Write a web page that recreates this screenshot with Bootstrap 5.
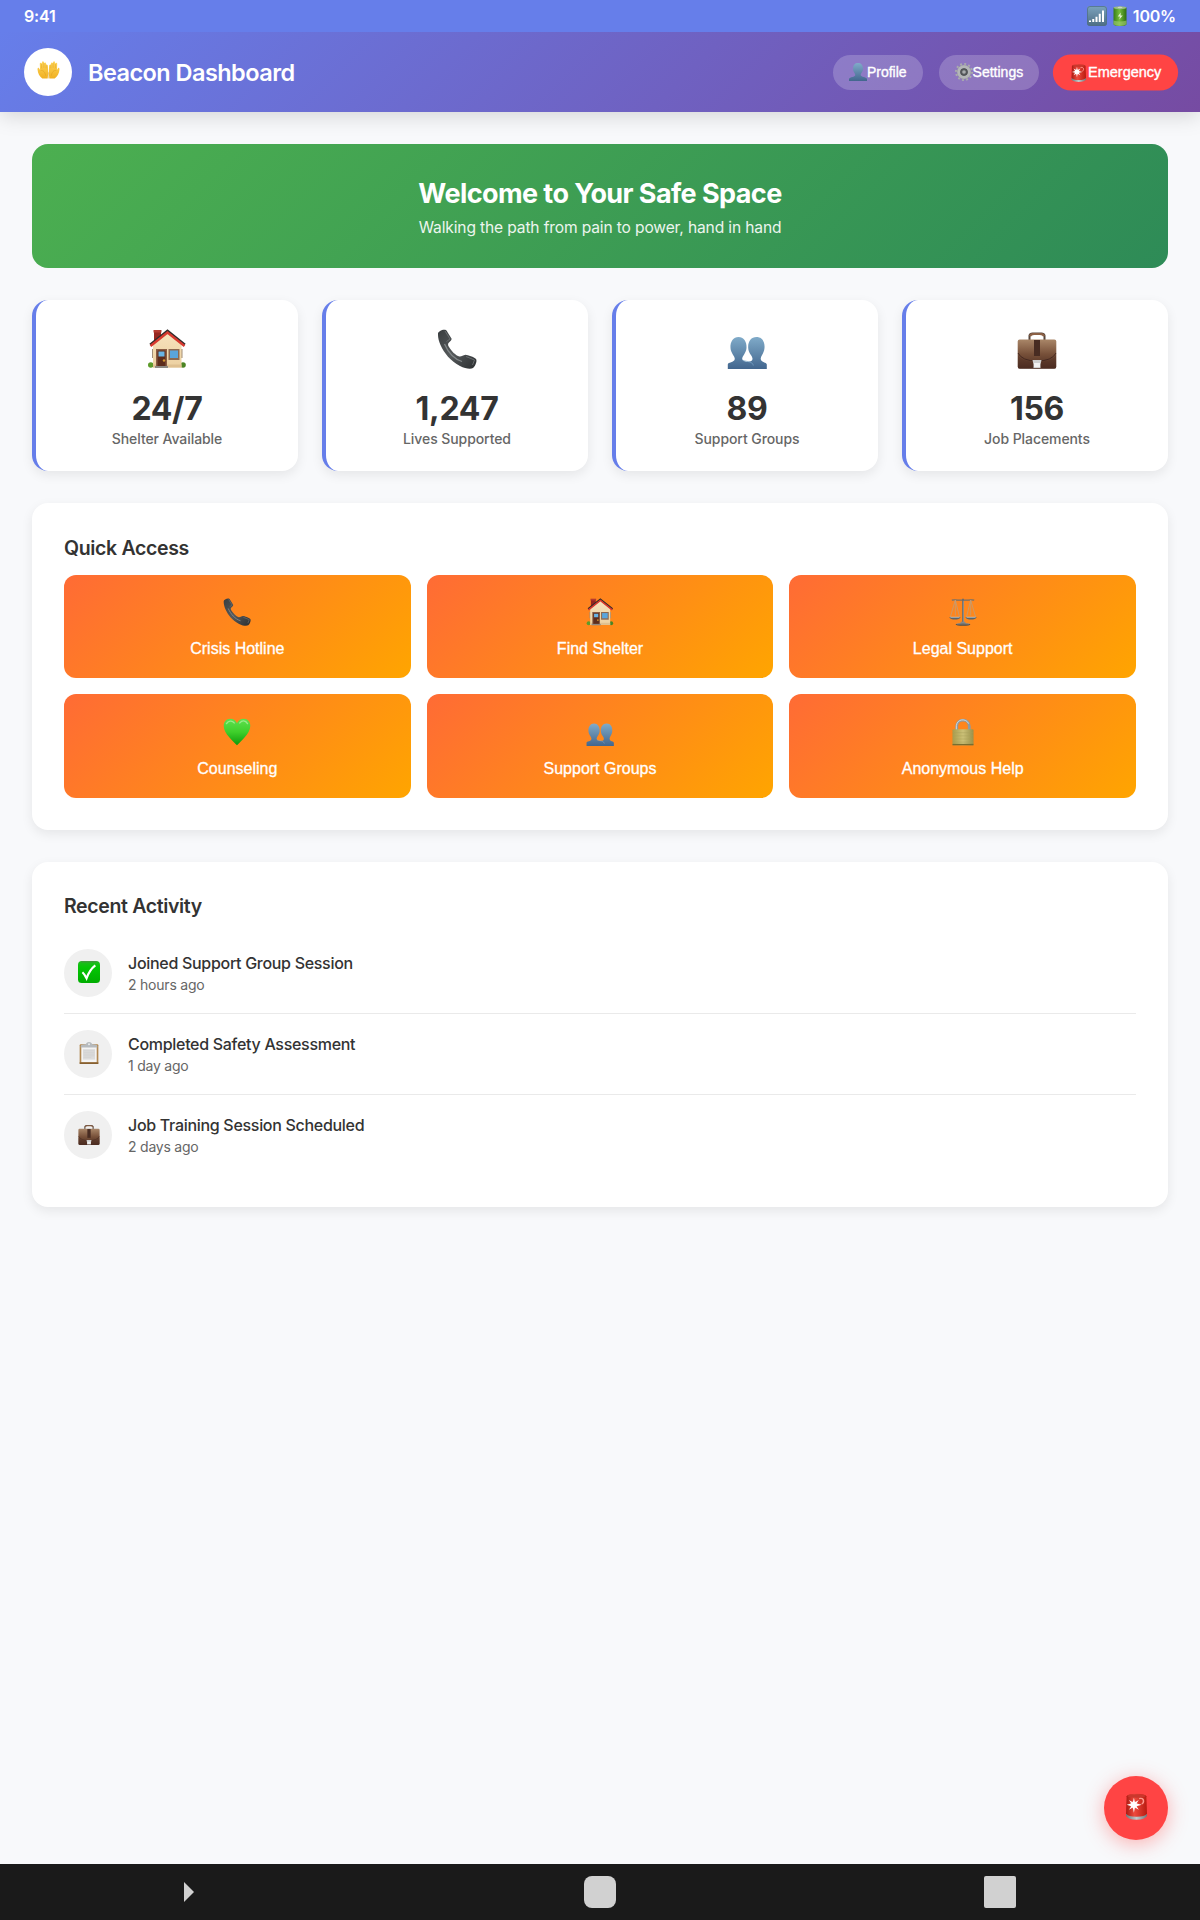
<!DOCTYPE html>
<html lang="en">
<head>
<meta charset="utf-8">
<meta name="viewport" content="width=device-width, initial-scale=1">
<title>Beacon Dashboard</title>
<link href="https://cdn.jsdelivr.net/npm/bootstrap@5.3.0/dist/css/bootstrap.min.css" rel="stylesheet">
<style>
body{font-family:Inter,"Liberation Sans",sans-serif;background:#f8f9fb;color:#333;min-height:1920px;line-height:1.2}
svg{display:block;flex:none}
.status-bar{height:32px;background:#667eea;font-size:16px;font-weight:600;letter-spacing:-.2px;position:relative;z-index:2}
.status-bar span{padding-top:1px}
.status-icons{gap:6px;margin-right:6px}
.top-bar{height:80px;background:linear-gradient(135deg,#667eea 0%,#764ba2 100%);box-shadow:0 4px 20px rgba(0,0,0,.15)}
.brand-disc{width:48px;height:48px}
.brand-name{font-size:23.5px;font-weight:600;letter-spacing:-.55px;padding-top:2px}
.pill{font:500 14px/19px "Liberation Sans",sans-serif;padding:8px 16px;height:35px;border:0;border-radius:18px;color:#fff;background:rgba(255,255,255,.2);-webkit-text-stroke:.35px #fff}
.pill-alert{background:#ff4444;transform:scale(1.035)}
.content-area{padding:32px;gap:32px}
.welcome{height:124px;border-radius:16px;background:linear-gradient(135deg,#4caf50 0%,#2e8b57 100%)}
.welcome h1{font-size:27px;font-weight:700;line-height:34px;letter-spacing:-.58px;margin:2px 0 0}
.welcome p{font-size:15.6px;line-height:20px;letter-spacing:-.15px;opacity:.9;margin:7px 0 0}
.stat-grid{display:grid;grid-template-columns:repeat(4,1fr);gap:24px}
.stat-tile{height:171px;border-radius:16px;border-left:4px solid #667eea;padding-top:29px;box-shadow:0 4px 12px rgba(0,0,0,.08)}
.stat-num{font-size:32px;font-weight:700;line-height:40px;letter-spacing:-.3px;margin-top:20px}
.stat-label{font-size:14px;font-weight:500;line-height:17px;letter-spacing:-.08px;color:#666;margin-top:1px}
.panel{border-radius:16px;padding:32px;box-shadow:0 4px 12px rgba(0,0,0,.08)}
.panel h2{font-size:19.5px;font-weight:600;line-height:24px;letter-spacing:-.35px;margin:0 0 15.3px}
.panel-quick h2{padding-top:1px;margin-bottom:14.5px}
.quick-grid{display:grid;grid-template-columns:repeat(3,1fr);gap:16px}
.quick-btn{height:103.5px;border:0;border-radius:12px;padding:23.500px 16px 0;color:#fff;background:linear-gradient(135deg,#ff6b35 0%,#ffa500 100%);font:500 16px/20px "Liberation Sans",sans-serif;-webkit-text-stroke:.3px #fff}
.quick-btn span{margin-top:13px}
.act-row{padding:16px 0;border-bottom:1px solid #eaeaea}
.act-row:last-child{border-bottom:0}
.act-disc{width:48px;height:48px;background:#f0f0f0;padding:0 0 2px 2px}
.act-title{font-size:16px;font-weight:500;line-height:20px;letter-spacing:-.3px}
.act-time{font-size:14px;line-height:17px;letter-spacing:-.22px;color:#666;margin-top:3px}
.fab{right:32px;bottom:80px;width:64px;height:64px;border:0;background:#ff4444;box-shadow:0 4px 20px rgba(255,68,68,.4);padding-bottom:4px}
.sys-nav{height:56px;background:#1a1a1a}
.sys-key{width:32px;height:32px}
.key-home{background:#d1d1d1;border-radius:8px}
.key-recent{background:#d1d1d1;border-radius:2px}
</style>
<script src="https://cdn.jsdelivr.net/npm/bootstrap@5.3.0/dist/js/bootstrap.bundle.min.js"></script>
</head>
<body>
<svg width="0" height="0" class="position-absolute" aria-hidden="true">
<defs>
<linearGradient id="gBlue" x2="0" y2="1"><stop stop-color="#80abc9"/><stop offset="1" stop-color="#42668e"/></linearGradient>
<linearGradient id="gBrown" x2="0" y2="1"><stop stop-color="#a98668"/><stop offset=".5" stop-color="#775039"/><stop offset="1" stop-color="#4a2b20"/></linearGradient>
<linearGradient id="gPhone" x2="1" y2="1"><stop stop-color="#3a3e40"/><stop offset=".5" stop-color="#55595b"/><stop offset="1" stop-color="#2b2e30"/></linearGradient>
<linearGradient id="gHeart" x2="0" y2="1"><stop stop-color="#5ee04f"/><stop offset=".5" stop-color="#3fcf2b"/><stop offset="1" stop-color="#0c9a0c"/></linearGradient>
<linearGradient id="gCheck" x2="0" y2="1"><stop stop-color="#23b923"/><stop offset=".3" stop-color="#05c505"/><stop offset="1" stop-color="#00ad00"/></linearGradient>
<linearGradient id="gWall" x2="0" y2="1"><stop stop-color="#f7e3bd"/><stop offset="1" stop-color="#ecd0a0"/></linearGradient>
<linearGradient id="gLock"><stop stop-color="#a89c4c"/><stop offset=".5" stop-color="#cbc077"/><stop offset="1" stop-color="#99904a"/></linearGradient>
<linearGradient id="gHand" x2="0" y2="1"><stop stop-color="#ffd75a"/><stop offset="1" stop-color="#f0b022"/></linearGradient>
<linearGradient id="gSiren"><stop stop-color="#a81a12"/><stop offset=".4" stop-color="#ee4a3d"/><stop offset="1" stop-color="#b81b10"/></linearGradient>
<linearGradient id="gBase"><stop stop-color="#6f7678"/><stop offset=".5" stop-color="#c3cacb"/><stop offset="1" stop-color="#6f7678"/></linearGradient>
<linearGradient id="gBat"><stop stop-color="#357d16"/><stop offset=".45" stop-color="#76bd3c"/><stop offset="1" stop-color="#2c6d12"/></linearGradient>
<linearGradient id="gSig" x2="0" y2="1"><stop stop-color="#7ba3bd"/><stop offset="1" stop-color="#4d6d84"/></linearGradient>
<symbol id="i-house" viewBox="0 0 40 40">
<circle cx="3.800" cy="36" r="2.800" fill="#5d9b2b"/><circle cx="36" cy="36" r="2.800" fill="#4b8424"/>
<path d="M7 2h7v14H7z" fill="#97261f"/><path d="M6.500 1h8v2.500h-8z" fill="#b53a30"/>
<path d="M5 20h2v9H5zM33.500 20h2v9h-2z" fill="#a39078"/>
<path d="M6 15 20.500 4 34.500 15v23.500H6z" fill="url(#gWall)"/>
<path d="M6 35.500h28.500v3H6z" fill="#dfc090"/>
<path d="M3 15.500 20.500 1.500 38 15.500" fill="none" stroke="#302b2b" stroke-width="2"/>
<path d="M3.500 17 20.500 3.500 37.500 17" fill="none" stroke="#d8392f" stroke-width="2.400"/>
<path d="M9 20h11v18H9z" fill="#8a5c42"/><path d="M10.500 21.500h8V37h-8z" fill="#5d2c1c"/>
<path d="M11.500 22.500h6v5h-6z" fill="#69b4e4"/><circle cx="17" cy="31.500" r="1.200" fill="#d59a32"/>
<path d="M21.500 20h11v11h-11z" fill="#8d6950"/><path d="M23 21.500h8v7.500h-8z" fill="#5aa5dc"/>
<path d="M8 37h13v2H8z" fill="#8d8983"/></symbol>
<symbol id="i-phone" viewBox="0 0 40 40">
<path d="M1 5C.5 3 5 .3 8 .8c1.500.2 2 1.400 3 3.200l3.500 5.500c.5 1-.8 2.500-2.500 4-1 1-1.500 2 0 4.500 2.500 4 6.500 8.500 10.500 9.500 2 .3 3.500-1.500 6-1.800 2.500.2 8.500 2.300 10.500 4.300 1.500 2-1 7.500-3 9-2.500 1.500-8 .5-13-2C13.500 32 7 24 3.500 16 2 12.500.8 8.500 1 5z" fill="url(#gPhone)"/>
<path d="M7.500 15c3.500 8 9.500 15 17.500 17.500" fill="none" stroke="#83888a" stroke-width="1.300"/>
<path d="M8 2 13 10l-3.500 2.500M29 27.500l8.500 3.500-2 5" fill="none" stroke="#6c7173" stroke-width=".9"/></symbol>
<symbol id="i-people" viewBox="0 0 40 40">
<path d="M.8 40v-4.500c0-2.500 6.500-1.800 7-5.500.2-3-4-5.500-4.300-11C3 12.500 6.500 8 11.500 8S20 12.500 19.500 19c-.4 5.500-4.500 8-4.300 11 .5 3.700 10.800 3 11 6V40z" fill="url(#gBlue)"/>
<path d="M13.500 32c4 2.500 2 0 6 .8 5.500-.4 5.800-1 6-3.300-.2-3-4-5-4.300-10.500C20.800 12.500 24 8 29.500 8s8.500 4.500 8 11c-.4 5.500-4 8-3.800 11 .4 3.700 6 3 6.100 5.500V40H26z" fill="url(#gBlue)"/>
<path d="M16 31.500c5.500 1.500 9.500 1 10.300 5" fill="none" stroke="#7ba7c8" stroke-width=".7"/></symbol>
<symbol id="i-person" viewBox="0 0 40 40">
<path d="M0 40v-5c2-4.500 13-4 14-8 .4-3.500-5-6.500-5-14C9 4 13.500 0 20 0s11 4 11 13c0 7.500-5.400 10.500-5 14 1 4 12 3.500 14 8v5z" fill="url(#gBlue)"/></symbol>
<symbol id="i-case" viewBox="0 0 40 40">
<path d="M12.500 11V6.500Q13 4.500 15.500 4.500h9Q27 4.500 27.500 6.500V11" fill="none" stroke="#55443a" stroke-width="2"/>
<path d="M12 7Q12.500 4 16 4h8q3.500 0 4 3l-2 .5q-.5-1.500-3-1.500h-6q-2.500 0-3 1.500z" fill="#8b6045"/>
<rect x=".7" y="10.500" width="38.600" height="29.300" rx="2" fill="url(#gBrown)"/>
<path d="M1 26q4 7 19 7t19-7v12q0 1.500-1.500 1.500h-35Q1 39.500 1 38z" fill="#4e2c22" opacity=".4"/>
<path d="M1 24q4 8 19 8t19-8" fill="none" stroke="#442820" stroke-width="1"/>
<path d="M17 11h6v16h-6z" fill="#482c22"/>
<path d="M15.500 31h9l-1 4.500V39h-7v-3.500z" fill="#cfcfcf"/><path d="M17 34h6v4h-6z" fill="#f1f1f1"/></symbol>
<symbol id="i-scales" viewBox="0 0 40 40">
<path d="M4 3c6-1.500 10 1 16 0 6 1 10-1.500 16 0" fill="none" stroke="#746f69" stroke-width="1.800"/>
<path d="M20 1v35" stroke="#686b6c" stroke-width="2.600"/><path d="M20.500 4v32" stroke="#b7b9b8" stroke-width=".7"/>
<path d="M9 3 2 27M9 3l6 24M9 3v22M31 3l-6 24M31 3l7 24M31 3v22" fill="none" stroke="#b9a184" stroke-width="1"/>
<path d="M.5 27h16c-1 5-15 5-16 0zM23.500 27h16c-1 5-15 5-16 0z" fill="#5d6468"/><path d="M2 27.500h13M25 27.500h13" stroke="#c3c9ca" stroke-width="1.200"/>
<path d="M17 34h6l1 3h-8z" fill="#87898a"/><ellipse cx="20" cy="37.800" rx="10.500" ry="2" fill="#4d4d4b"/><path d="M11 37h18" stroke="#b3b2ab" stroke-width="1"/></symbol>
<symbol id="i-heart" viewBox="0 0 40 40">
<path d="M20 39C15 33 1 23 1 11 1 5 5 1 10.500 1c4.500 0 8 2.700 9.500 6.500C21.500 3.700 25 1 29.500 1 35 1 39 5 39 11c0 12-14 22-19 28z" fill="url(#gHeart)"/>
<path d="M5 8c2-4 8-5 11-1M24 7c3-4 8-4 11 1" fill="none" stroke="#b4f3a4" stroke-width="2" stroke-linecap="round" opacity=".7"/></symbol>
<symbol id="i-lock" viewBox="0 0 40 40">
<path d="M11 20v-8c0-12 18-12 18 0v8" fill="none" stroke="#8f9ba1" stroke-width="4"/><path d="M10.500 18v-7c1-10 14-11 17.500-3" fill="none" stroke="#d3dde1" stroke-width="1.300"/>
<rect x="5" y="16" width="30" height="23" rx="1.500" fill="url(#gLock)"/><path d="M5 21h30M5 25.500h30M5 30h30M5 34.500h30" stroke="#a99e58" stroke-width=".6"/><path d="M5 37h30v2H5z" fill="#786d30"/></symbol>
<symbol id="i-check" viewBox="0 0 40 40">
<rect width="40" height="40" rx="7" fill="url(#gCheck)"/><path d="M6 1.500h28" stroke="#57864f" stroke-width="1.500"/>
<path d="M8 20.500c3 2.500 5.500 7 7.500 11C19 22 25.500 12.500 31.500 8" fill="none" stroke="#fff" stroke-width="4"/></symbol>
<symbol id="i-clip" viewBox="0 0 40 40">
<rect x="3" y="4" width="34" height="36" rx="2" fill="#b18852"/><path d="M3 37h34v3H3z" fill="#865f30"/>
<rect x="6" y="6.500" width="28" height="30" fill="#f4f4f4"/><path d="M9 13h22v19H9z" fill="#dcdcdc"/>
<path d="M10 16h20M10 19h20M10 22h20M10 25h20M10 28h14" stroke="#cdcdcd" stroke-width="1"/>
<path d="M5 7q1-3 9-3Q16 0 20 0t6 4q8 0 9 3v3H5z" fill="#b6babd"/><circle cx="20" cy="4" r="1.700" fill="#eceff0"/></symbol>
<symbol id="i-siren" viewBox="4 0 32 41">
<path d="M4 31v4q3 5.500 16 5.500T36 35v-4z" fill="url(#gBase)"/>
<path d="M5 5q1-4 15-4t15 4l1 26q-3 5-16 5T4 31z" fill="url(#gSiren)"/>
<ellipse cx="20" cy="4.500" rx="13.500" ry="2.500" fill="#c9382d"/>
<path d="M24 8.500c8-2 8 6 4 8" fill="none" stroke="#ff9a90" stroke-width="2.200"/>
<circle cx="16" cy="18" r="5.500" fill="#ffb3ab" opacity=".6"/>
<path d="m16 7 1.600 7 5.900-3.500-3.500 5.500 8 2-8 2 3.500 5.500-5.900-3.500L16 30l-1.600-8-5.900 3.500 3.500-5.500-7-2 7-2-3.500-5.500 5.900 3.500z" fill="#fff"/></symbol>
<symbol id="i-gear" viewBox="0 0 40 40">
<circle cx="20" cy="20" r="17.500" fill="none" stroke="#a9acae" stroke-width="5" stroke-dasharray="4.200 4.960"/>
<circle cx="20" cy="20" r="12" fill="#77797c" stroke="#b4b6b8" stroke-width="7"/>
<circle cx="20" cy="20" r="15.800" fill="none" stroke="#8b8e90" stroke-width=".8"/>
<circle cx="20" cy="20" r="7.500" fill="#5a5d61" stroke="#44474a" stroke-width="1.500"/><circle cx="20" cy="20" r="4" fill="#a9acae"/></symbol>
<symbol id="i-hands" viewBox="0 0 40 32">
<path id="palm" d="M18.500 31H9C4 27 1 22 .5 15c-.2-3 2-4 3-1.500L5 16 4.500 5C4.500 2.500 7 2.500 7.500 5L8.500 2c.5-2.300 3-2 3.200.3L12.500 4c.7-2 3-1.800 3.200.5l.5 3c1-1.500 2.600-.8 2.800 1L19.500 22z" fill="url(#gHand)"/>
<use href="#palm" transform="matrix(-1 0 0 1 40 0)"/>
<path d="M7.800 5v8M11.800 3v9M15.800 6v7M32.200 5v8M28.200 3v9M24.200 6v7M6 17c5-1 8 3 9 9M34 17c-5-1-8 3-9 9M20 20v11" fill="none" stroke="#d69519" stroke-width=".7"/></symbol>
<symbol id="i-signal" viewBox="0 0 40 40">
<rect width="40" height="40" rx="6" fill="url(#gSig)"/><rect x="1" y="1" width="38" height="38" rx="5" fill="none" stroke="#4f6f85" stroke-width="1.500"/>
<path d="M4 29h4v3H4zM10.500 26h4v6h-4zM17 21.500h4V32h-4zM23.500 15.500h4V32h-4zM30 9h4v23h-4z" fill="#fff"/></symbol>
<symbol id="i-battery" viewBox="0 0 28 40">
<path d="M1 3v34q3 3 13 3t13-3V3z" fill="url(#gBat)"/><ellipse cx="14" cy="3.500" rx="13" ry="3" fill="#9bbd83"/><ellipse cx="14" cy="3" rx="5" ry="1.500" fill="#cbd6c2"/>
<path d="M1 29q13 4 26 0v8q-13 5-26 0z" fill="#9cca70" opacity=".65"/><path d="m15.500 13-6 8h4.500L12.500 27l7-8H15z" fill="#e2f0d2"/></symbol>
</defs></svg>

<div class="status-bar d-flex align-items-center justify-content-between px-4 text-white">
<span>9:41</span>
<div class="d-flex align-items-center"><div class="status-icons d-flex"><svg width="20" height="20"><use href="#i-signal"/></svg><svg width="14" height="20"><use href="#i-battery"/></svg></div><span>100%</span></div>
</div>
<header class="top-bar d-flex align-items-center justify-content-between px-4 text-white">
<div class="d-flex align-items-center gap-3">
<div class="brand-disc rounded-circle bg-white d-flex align-items-center justify-content-center pb-1"><svg width="23" height="18"><use href="#i-hands"/></svg></div>
<span class="brand-name">Beacon Dashboard</span>
</div>
<div class="d-flex gap-3">
<button class="pill d-flex align-items-center"><svg width="18" height="18"><use href="#i-person"/></svg><span>Profile</span></button>
<button class="pill d-flex align-items-center"><svg width="18" height="18"><use href="#i-gear"/></svg><span>Settings</span></button>
<button class="pill pill-alert d-flex align-items-center"><svg width="18" height="18"><use href="#i-siren"/></svg><span>Emergency</span></button>
</div>
</header>

<main class="content-area d-flex flex-column">
<section class="welcome text-white text-center d-flex flex-column justify-content-center">
<h1>Welcome to Your Safe Space</h1>
<p>Walking the path from pain to power, hand in hand</p>
</section>
<section class="stat-grid text-center">
<div class="stat-tile bg-white"><svg class="mx-auto" width="40" height="40"><use href="#i-house"/></svg><div class="stat-num">24/7</div><div class="stat-label">Shelter Available</div></div>
<div class="stat-tile bg-white"><svg class="mx-auto" width="40" height="40"><use href="#i-phone"/></svg><div class="stat-num">1,247</div><div class="stat-label">Lives Supported</div></div>
<div class="stat-tile bg-white"><svg class="mx-auto" width="40" height="40"><use href="#i-people"/></svg><div class="stat-num">89</div><div class="stat-label">Support Groups</div></div>
<div class="stat-tile bg-white"><svg class="mx-auto" width="40" height="40"><use href="#i-case"/></svg><div class="stat-num">156</div><div class="stat-label">Job Placements</div></div>
</section>
<section class="panel panel-quick bg-white">
<h2>Quick Access</h2>
<div class="quick-grid">
<button class="quick-btn d-flex flex-column align-items-center"><svg width="28" height="28"><use href="#i-phone"/></svg><span>Crisis Hotline</span></button>
<button class="quick-btn d-flex flex-column align-items-center"><svg width="28" height="28"><use href="#i-house"/></svg><span>Find Shelter</span></button>
<button class="quick-btn d-flex flex-column align-items-center"><svg width="28" height="28"><use href="#i-scales"/></svg><span>Legal Support</span></button>
<button class="quick-btn d-flex flex-column align-items-center"><svg width="28" height="28"><use href="#i-heart"/></svg><span>Counseling</span></button>
<button class="quick-btn d-flex flex-column align-items-center"><svg width="28" height="28"><use href="#i-people"/></svg><span>Support Groups</span></button>
<button class="quick-btn d-flex flex-column align-items-center"><svg width="28" height="28"><use href="#i-lock"/></svg><span>Anonymous Help</span></button>
</div>
</section>
<section class="panel bg-white">
<h2>Recent Activity</h2>
<div class="act-row d-flex align-items-center gap-3">
<div class="act-disc rounded-circle d-flex align-items-center justify-content-center"><svg width="22" height="22"><use href="#i-check"/></svg></div>
<div><div class="act-title">Joined Support Group Session</div><div class="act-time">2 hours ago</div></div>
</div>
<div class="act-row d-flex align-items-center gap-3">
<div class="act-disc rounded-circle d-flex align-items-center justify-content-center"><svg width="22" height="22"><use href="#i-clip"/></svg></div>
<div><div class="act-title">Completed Safety Assessment</div><div class="act-time">1 day ago</div></div>
</div>
<div class="act-row d-flex align-items-center gap-3">
<div class="act-disc rounded-circle d-flex align-items-center justify-content-center"><svg width="22" height="22"><use href="#i-case"/></svg></div>
<div><div class="act-title">Job Training Session Scheduled</div><div class="act-time">2 days ago</div></div>
</div>
</section>
</main>

<button class="fab position-fixed rounded-circle d-flex align-items-center justify-content-center" aria-label="Emergency"><svg width="21" height="27"><use href="#i-siren"/></svg></button>
<nav class="sys-nav fixed-bottom d-flex justify-content-around align-items-center">
<svg class="sys-key" viewBox="0 0 32 32"><path d="M0 6 10 16 0 26z" fill="#d1d1d1"/></svg>
<div class="sys-key key-home"></div>
<div class="sys-key key-recent"></div>
</nav>
</body>
</html>
